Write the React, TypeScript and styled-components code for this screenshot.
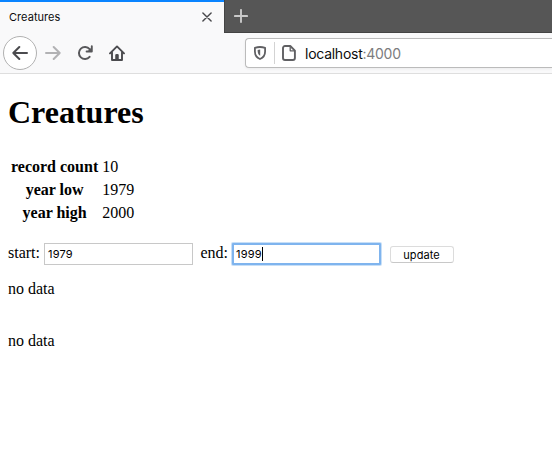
import React from "react";
import styled, { createGlobalStyle } from "styled-components";

const GlobalStyle = createGlobalStyle`
  *, *::before, *::after { box-sizing: border-box; }
  html, body { margin: 0; padding: 0; background: #fff; }
  body { overflow: hidden; }
`;

const Browser = styled.div`
  width: 552px;
  height: 450px;
  display: flex;
  flex-direction: column;
  overflow: hidden;
  background: #fff;
`;

const TabStrip = styled.div`
  display: flex;
  flex: none;
  height: 33px;
  background: #565656;
`;

const Tab = styled.div`
  display: flex;
  align-items: center;
  justify-content: space-between;
  width: 224px;
  padding: 0 12px 1px 9px;
  border-top: 2px solid #0a84ff;
  background: #f9f9fa;
  color: #0c0c0d;
  font: 11px/16px Inter, sans-serif;
  letter-spacing: 0.05px;
`;

const NewTab = styled.div`
  flex: 1;
  padding: 9px 0 0 9px;
  border-left: 1px solid #444;
  border-bottom: 1px solid #434343;
`;

const Icon = styled.svg`
  display: block;
  flex: none;
  fill: none;
`;

const Toolbar = styled.div`
  display: flex;
  flex: none;
  align-items: center;
  height: 41px;
  padding-left: 3px;
  background: #f9f9fa;
  border-bottom: 1px solid #dedede;
`;

const BackButton = styled.div`
  display: flex;
  align-items: center;
  justify-content: center;
  width: 34px;
  height: 34px;
  border: 1px solid #b1b1b1;
  border-radius: 50%;
  background: #fff;
`;

const NavIcons = styled.div`
  display: flex;
  gap: 16px;
  width: 208px;
  padding-left: 8px;
`;

const AddressBar = styled.div`
  display: flex;
  flex: 1;
  align-items: center;
  height: 30px;
  padding-left: 6px;
  border: 1px solid #bbb;
  border-right: 0;
  border-radius: 4px 0 0 4px;
  background: #fff;
  box-shadow: 0 1px 3px rgba(0, 0, 0, 0.06);
`;

const Divider = styled.div`
  width: 1px;
  height: 22px;
  margin: 0 6px;
  background: #d3d3d3;
`;

const Address = styled.div`
  margin-left: 8px;
  padding-top: 2px;
  color: #0c0c0d;
  font: 14px/20px Inter, sans-serif;
  letter-spacing: -0.26px;
`;

const Port = styled.span`
  color: #7c7c7e;
`;

const Page = styled.main`
  padding: 20px 8px 0;
  color: #000;
  font: 16px/18px "Liberation Serif", serif;
`;

const Title = styled.h1`
  margin: 0 0 23px;
  font-size: 32px;
  line-height: 37px;
`;

const Summary = styled.table`
  border-spacing: 2px;
  border-collapse: separate;

  th, td {
    height: 21px;
    padding: 1px;
  }
  th { text-align: center; }
  td { text-align: left; }
`;

const Form = styled.form`
  display: flex;
  align-items: center;
  height: 24px;
  margin-top: 17px;
`;

const Label = styled.label`
  display: flex;
  align-items: center;
  height: 24px;
  margin-right: 7.5px;
  padding-bottom: 0;
  white-space: pre;
`;

const Caption = styled.span`
  height: 20px;
`;

const Field = styled.span<{ $focused?: boolean }>`
  display: flex;
  align-items: center;
  width: 149px;
  height: 22px;
  padding-left: ${(p) => (p.$focused ? 2 : 3)}px;
  border: ${(p) => (p.$focused ? "2px solid #7fb4ee" : "1px solid #c8c8c8")};
  border-radius: ${(p) => (p.$focused ? 1 : 0)}px;
  box-shadow: ${(p) => (p.$focused ? "0 0 0 1px rgba(131, 183, 238, 0.45)" : "none")};
  background: #fff;
  font: 11px/15px Inter, sans-serif;
  letter-spacing: 0.2px;
`;

const Caret = styled.span`
  width: 1px;
  height: 14px;
  background: #000;
`;

const Update = styled.button`
  width: 64px;
  height: 17px;
  margin: 1px 0 0 1px;
  padding: 0;
  border: 1px solid #dcdcdc;
  border-bottom-color: #c8c8c8;
  border-radius: 3px;
  background: #fff;
  color: #000;
  font: 11px/14px Inter, sans-serif;
  letter-spacing: 0.1px;
`;

const Notice = styled.p`
  margin: 0;
  padding-top: 14px;
  height: 52px;
`;

const summary = [
  ["record count", "10"],
  ["year low", "1979"],
  ["year high", "2000"],
];

export default function App() {
  return (
    <Browser>
      <GlobalStyle />
      <TabStrip>
        <Tab>
          Creatures
          <Icon width="10" height="10" viewBox="0 0 10 10" stroke="#48484b" strokeWidth="1.4" strokeLinecap="round">
            <path d="M.9.9l8.2 8.2M9.1.9L.9 9.1" />
          </Icon>
        </Tab>
        <NewTab>
          <Icon width="14" height="14" viewBox="0 0 14 14" stroke="#c9c9c9" strokeWidth="1.9" strokeLinecap="round">
            <path d="M7 .9v12.2M.9 7h12.2" />
          </Icon>
        </NewTab>
      </TabStrip>
      <Toolbar>
        <BackButton>
          <Icon width="16" height="16" viewBox="0 0 16 16" stroke="#4b4b4e" strokeWidth="2" strokeLinecap="round" strokeLinejoin="round">
            <path d="M15 8H1.3M7.3 2L1.3 8l6 6" />
          </Icon>
        </BackButton>
        <NavIcons>
          <Icon width="16" height="16" viewBox="0 0 16 16" stroke="#b2b2b4" strokeWidth="2" strokeLinecap="round" strokeLinejoin="round">
            <path d="M1 8h13.7M8.7 2l6 6-6 6" />
          </Icon>
          <Icon width="16" height="16" viewBox="0 0 16 16">
            <path d="M12.6 4.2A6 6 0 1 0 12.6 11.8" stroke="#58585b" strokeWidth="2" strokeLinecap="round" />
            <path d="M14.8 1.3v5.2H9.6" stroke="#58585b" strokeWidth="1.9" strokeLinecap="round" strokeLinejoin="round" />
            <path d="M14.5 2.5v3.8h-3.8z" fill="#58585b" />
          </Icon>
          <Icon width="16" height="16" viewBox="0 0 16 16" stroke="#4b4b4e" strokeLinecap="round" strokeLinejoin="round">
            <path d="M1 8.4l7-7 7 7" strokeWidth="1.9" />
            <path d="M3 7.5V15h10V7.5" strokeWidth="1.9" />
            <path d="M6.8 14V9.6h2.4V14z" fill="#4b4b4e" strokeWidth="1" />
          </Icon>
        </NavIcons>
        <AddressBar>
          <Icon width="16" height="16" viewBox="0 0 16 16">
            <path d="M8 2c1.6 0 3.4.3 5.1.9v3.6c0 3.8-1.9 6.2-5.1 7.5-3.2-1.3-5.1-3.7-5.1-7.5V2.9C4.6 2.3 6.4 2 8 2z" stroke="#606063" strokeWidth="1.8" strokeLinejoin="round" />
            <path d="M8.2 4.6v6.2C6.3 9.7 5.6 8.2 5.6 5z" fill="#606063" />
          </Icon>
          <Divider />
          <Icon width="16" height="16" viewBox="0 0 16 16" stroke="#606063" strokeWidth="1.9" strokeLinejoin="round">
            <path d="M4 1h5.3l4.6 4.6V13a2 2 0 0 1-2 2H4a2 2 0 0 1-2-2V3a2 2 0 0 1 2-2z" />
            <path d="M9.2 1.3v4.5h4.5" strokeWidth="1.3" />
          </Icon>
          <Address>localhost<Port>:4000</Port></Address>
        </AddressBar>
      </Toolbar>
      <Page>
        <Title>Creatures</Title>
        <Summary>
          <tbody>
            {summary.map(([name, value]) => (
              <tr key={name}>
                <th>{name}</th>
                <td>{value}</td>
              </tr>
            ))}
          </tbody>
        </Summary>
        <Form onSubmit={(e) => e.preventDefault()}>
          <Label><Caption>{"start: "}</Caption><Field>1979</Field></Label>
          <Label><Caption>{"end: "}</Caption><Field $focused>1999<Caret /></Field></Label>
          <Update type="submit">update</Update>
        </Form>
        <Notice>no data</Notice>
        <Notice>no data</Notice>
      </Page>
    </Browser>
  );
}
